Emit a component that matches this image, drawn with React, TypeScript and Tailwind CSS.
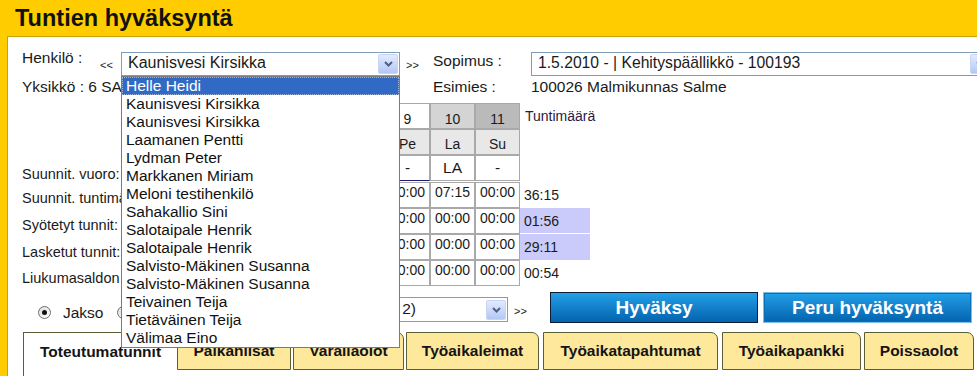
import React from "react";

const names = [
  "Helle Heidi",
  "Kaunisvesi Kirsikka",
  "Kaunisvesi Kirsikka",
  "Laamanen Pentti",
  "Lydman Peter",
  "Markkanen Miriam",
  "Meloni testihenkilö",
  "Sahakallio Sini",
  "Salotaipale Henrik",
  "Salotaipale Henrik",
  "Salvisto-Mäkinen Susanna",
  "Salvisto-Mäkinen Susanna",
  "Teivainen Teija",
  "Tietäväinen Teija",
  "Välimaa Eino",
];

// Columns 5-8 lie under the open drop-down list; they are drawn without text.
const days = ["", "", "", "", "9", "10", "11"];
const dayNames = ["", "", "", "", "Pe", "La", "Su"];
const shifts = ["", "", "", "", "-", "LA", "-"];
const dayBg = ["bg-white", "bg-white", "bg-white", "bg-white", "bg-white", "bg-[#d4d4d4]", "bg-[#bababa]"];

const valueRows = [
  { label: "Suunnit. tuntimäärä:", vals: ["", "", "", "", "00:00", "07:15", "00:00"], total: "36:15", hl: false, pt: "pt-[7px]" },
  { label: "Syötetyt tunnit:", vals: ["", "", "", "", "00:00", "00:00", "00:00"], total: "01:56", hl: true, pt: "pt-[8px]" },
  { label: "Lasketut tunnit:", vals: ["", "", "", "", "00:00", "00:00", "00:00"], total: "29:11", hl: true, pt: "pt-[9px]" },
  { label: "Liukumasaldon muutos:", vals: ["", "", "", "", "00:00", "00:00", "00:00"], total: "00:54", hl: false, pt: "pt-[9px]" },
];

const cellBase =
  "w-[45px] h-[26px] shrink-0 border border-[#a9a9a9] flex items-center justify-center";

function Chevron() {
  return (
    <svg width="9" height="6" viewBox="0 0 9 6">
      <path d="M1 1 L4.5 4.5 L8 1" fill="none" stroke="#4d6185" strokeWidth="2" />
    </svg>
  );
}

function ArrowBtn() {
  return (
    <div className="w-[20px] h-[20px] shrink-0 mr-[1px] rounded-[2px] border border-[#c6d4f7] bg-linear-to-b from-[#e3ebfe] to-[#b4c7f5] flex items-center justify-center">
      <Chevron />
    </div>
  );
}

function Radio({ checked }: { checked: boolean }) {
  return (
    <span className="w-[13px] h-[13px] shrink-0 rounded-full border border-[#6f6f6f] bg-linear-to-br from-[#dcdcdc] to-white flex items-center justify-center">
      {checked && <span className="w-[5px] h-[5px] rounded-full bg-[#111]" />}
    </span>
  );
}

const tabs = [
  { t: "Palkanlisat", w: "w-[114px]", ml: "ml-0" },
  { t: "Varallaolot", w: "w-[111px]", ml: "ml-[2px]" },
  { t: "Työaikaleimat", w: "w-[133px]", ml: "ml-[2px]" },
  { t: "Työaikatapahtumat", w: "w-[175px]", ml: "ml-[4px]" },
  { t: "Työaikapankki", w: "w-[139px]", ml: "ml-[4px]" },
  { t: "Poissaolot", w: "w-[110px]", ml: "ml-[3px]" },
];

export default function App() {
  return (
    <div className="w-[977px] h-[376px] overflow-hidden bg-[#ffcc00] font-['Liberation_Sans',Arial,sans-serif] text-[#1a1a1a] flex flex-col">
      <div className="h-[36px] shrink-0 pl-[15px] flex items-center">
        <h1 className="text-[23.5px] font-bold text-[#111] leading-none pt-[2px]">Tuntien hyväksyntä</h1>
      </div>

      <div className="flex-1 ml-[7px] bg-white border-l border-t border-[#c9a300] pl-[14px] pt-[15px] text-[15.5px] leading-[18px]">
        {/* Henkilö / Sopimus */}
        <div className="flex items-start h-[24px] w-max">
          <div className="w-[78px] shrink-0 -mt-[3px]">Henkilö :</div>
          <div className="w-[21px] shrink-0 self-center text-[11px] leading-[12px] pt-[2px]">&lt;&lt;</div>
          <div className="relative w-[279px] h-[24px] shrink-0 border border-[#7f9db9] flex items-center">
            <span className="flex-1 pl-[6px] pb-[2px] whitespace-nowrap text-[16px]">Kaunisvesi Kirsikka</span>
            <ArrowBtn />
            <div className="absolute left-[-1px] top-[23px] w-[279px] bg-white border border-[#7a7a7a] z-20">
              {names.map((n, i) => (
                <div
                  key={i}
                  className={
                    i === 0
                      ? "h-[18px] leading-[18px] pl-[4px] whitespace-nowrap bg-[#316ac5] text-white outline-1 outline-dotted outline-offset-[-1px] outline-[#9fb5e0]"
                      : "h-[18px] leading-[18px] pl-[4px] whitespace-nowrap text-[#111]"
                  }
                >
                  {n}
                </div>
              ))}
            </div>
          </div>
          <div className="w-[33px] shrink-0 pl-[6px] self-center text-[11px] leading-[12px] pt-[1px]">&gt;&gt;</div>
          <div className="w-[98px] shrink-0">Sopimus :</div>
          <div className="w-[461px] h-[24px] shrink-0 border border-[#7f9db9] flex items-center">
            <span className="flex-1 pl-[6px] pb-[2px] whitespace-nowrap text-[15.7px]">1.5.2010 - | Kehityspäällikkö - 100193</span>
            <ArrowBtn />
          </div>
        </div>

        {/* Yksikkö / Esimies */}
        <div className="flex items-start h-[27px] w-max">
          <div className="w-[99px] shrink-0 mt-[2px] whitespace-nowrap overflow-hidden">Yksikkö : 6 SA</div>
          <div className="w-[312px] shrink-0" />
          <div className="w-[98px] shrink-0 mt-[2px]">Esimies :</div>
          <div className="mt-[2px] whitespace-nowrap">100026 Malmikunnas Salme</div>
        </div>

        {/* Table */}
        <div className="flex flex-col text-[14px] leading-[16px] w-max">
          <div className="flex h-[26px]">
            <div className="w-[183px] shrink-0" />
            {days.map((d, i) => (
              <div key={i} className={`${cellBase} ${dayBg[i]} pt-[5px]`}>{d}</div>
            ))}
            <div className="w-[70px] shrink-0 pl-[5px] flex items-center text-[#2a1a44]">Tuntimäärä</div>
          </div>
          <div className="flex h-[26px]">
            <div className="w-[183px] shrink-0" />
            {dayNames.map((d, i) => (
              <div key={i} className={`${cellBase} bg-[#e8e8e8] pt-[4px]`}>{d}</div>
            ))}
            <div className="w-[70px] shrink-0" />
          </div>
          <div className="flex h-[26px]">
            <div className="w-[99px] shrink-0 pt-[10px] text-[14.5px] leading-[18px] whitespace-nowrap overflow-hidden">Suunnit. vuoro:</div>
            <div className="w-[84px] shrink-0" />
            {shifts.map((d, i) => (
              <div
                key={i}
                className={`${cellBase} bg-white text-[15.5px] ${i === 4 ? "border-b-[#1c1c78]" : ""}`}
              >
                {d}
              </div>
            ))}
            <div className="w-[70px] shrink-0" />
          </div>
          <div className="h-[1px]" />
          {valueRows.map((r, ri) => (
            <div key={ri} className="flex h-[26px]">
              <div className={`w-[99px] shrink-0 ${r.pt} text-[14.5px] leading-[18px] whitespace-nowrap overflow-hidden`}>{r.label}</div>
              <div className="w-[84px] shrink-0" />
              {r.vals.map((v, i) => (
                <div key={i} className={`${cellBase} bg-white pb-[6px]`}>{v}</div>
              ))}
              <div
                className={`w-[70px] shrink-0 pl-[4px] flex items-center ${r.hl ? "bg-[#cacafb]" : ""} ${ri === 1 ? "border-b border-white" : ""}`}
              >
                {r.total}
              </div>
            </div>
          ))}
        </div>

        {/* Radio / select / buttons */}
        <div className="flex items-start h-[31px] mt-[6px] w-max">
          <div className="mt-[14px] ml-[16px]">
            <Radio checked />
          </div>
          <div className="mt-[12px] ml-[12px] w-[40px]">Jakso</div>
          <div className="mt-[14px] ml-[14px]">
            <Radio checked={false} />
          </div>
          <div className="w-[59px] shrink-0" />
          <div className="mt-[5px] w-[319px] h-[25px] shrink-0 border border-[#7f9db9] flex items-center">
            <div className="w-[226px] shrink-0 flex justify-end overflow-hidden whitespace-nowrap pb-[2px]">
              <span className="shrink-0">2)</span>
            </div>
            <div className="flex-1" />
            <ArrowBtn />
          </div>
          <div className="w-[42px] shrink-0 pl-[6px] mt-[13px] text-[11px] leading-[12px]">&gt;&gt;</div>
          <button className="w-[208px] h-[31px] shrink-0 border border-[#0b1d33] bg-linear-to-b from-[#22a0e8] to-[#0563ae] text-white font-bold text-[19px] leading-none">
            Hyväksy
          </button>
          <button className="w-[209px] h-[31px] ml-[5px] shrink-0 border border-[#79bde9] shadow-[inset_0_0_0_1px_#0b6fb8] bg-linear-to-b from-[#22a0e8] to-[#0563ae] text-white font-bold text-[19px] leading-none">
            Peru hyväksyntä
          </button>
        </div>

        {/* Tabs */}
        <div className="flex items-start mt-[9px] ml-[1px] w-max">
          <div className="w-[154px] h-[60px] shrink-0 bg-white border-l-[1.5px] border-t-[1.5px] border-[#5a6035] flex justify-center pt-[10px] font-bold text-[15.5px] text-[#141414]">
            Toteutumatunnit
          </div>
          {tabs.map((t, i) => (
            <div
              key={i}
              className={`${t.w} ${t.ml} h-[38px] shrink-0 bg-[#fde89c] border-[1.5px] border-[#5a6035] rounded-tr-[7px] flex items-center justify-center font-bold text-[15.5px] text-[#141414]`}
            >
              {t.t}
            </div>
          ))}
        </div>
      </div>
    </div>
  );
}
